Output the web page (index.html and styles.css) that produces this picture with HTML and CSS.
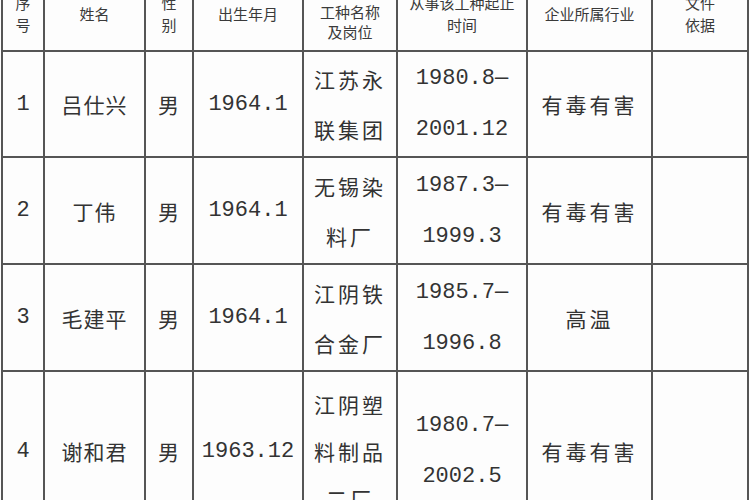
FILE: index.html
```html
<!DOCTYPE html>
<html lang="zh">
<head>
<meta charset="utf-8">
<title>人员名单</title>
<link rel="stylesheet" href="styles.css">
</head>
<body>
<div class="frame">
<table class="sheet">
  <colgroup>
    <col class="c-no"><col class="c-name"><col class="c-sex"><col class="c-birth">
    <col class="c-job"><col class="c-time"><col class="c-ind"><col class="c-doc">
  </colgroup>
  <thead>
    <tr class="head">
      <th>序<br>号</th>
      <th>姓名</th>
      <th>性<br>别</th>
      <th>出生年月</th>
      <th class="h-job">工种名称<br>及岗位</th>
      <th>从事该工种起止<br>时间</th>
      <th>企业所属行业</th>
      <th>文件<br>依据</th>
    </tr>
  </thead>
  <tbody>
    <tr class="r1">
      <td class="num">1</td>
      <td class="cn">吕仕兴</td>
      <td class="cn">男</td>
      <td class="num">1964.1</td>
      <td class="job">江苏永<br>联集团</td>
      <td class="num period">1980.8—<br>2001.12</td>
      <td class="cn wide">有毒有害</td>
      <td></td>
    </tr>
    <tr class="r2">
      <td class="num">2</td>
      <td class="cn">丁伟</td>
      <td class="cn">男</td>
      <td class="num">1964.1</td>
      <td class="job">无锡染<br>料厂</td>
      <td class="num period">1987.3—<br>1999.3</td>
      <td class="cn wide">有毒有害</td>
      <td></td>
    </tr>
    <tr class="r3">
      <td class="num">3</td>
      <td class="cn">毛建平</td>
      <td class="cn">男</td>
      <td class="num">1964.1</td>
      <td class="job">江阴铁<br>合金厂</td>
      <td class="num period">1985.7—<br>1996.8</td>
      <td class="cn wide">高温</td>
      <td></td>
    </tr>
    <tr class="r4">
      <td class="num">4</td>
      <td class="cn">谢和君</td>
      <td class="cn">男</td>
      <td class="num">1963.12</td>
      <td class="job tight">江阴塑<br>料制品<br>二厂</td>
      <td class="num period">1980.7—<br>2002.5</td>
      <td class="cn wide">有毒有害</td>
      <td></td>
    </tr>
  </tbody>
</table>
</div>
</body>
</html>
```

FILE: styles.css
```css
html, body {
  margin: 0;
  padding: 0;
  background: #ffffff;
}

.frame {
  width: 750px;
  height: 500px;
  overflow: hidden;
  background: #fdfdfd;
}

.sheet {
  margin-top: -24px;
  margin-left: 1px;
  width: 746px;
  border-collapse: collapse;
  table-layout: fixed;
  color: #333333;
  font-family: "Noto Sans CJK SC", sans-serif;
}

.c-no { width: 42px; }
.c-name { width: 101px; }
.c-sex { width: 48px; }
.c-birth { width: 110px; }
.c-job { width: 94px; }
.c-time { width: 130px; }
.c-ind { width: 125px; }
.c-doc { width: 96px; }

.sheet th,
.sheet td {
  border: 2px solid #555555;
  padding: 0;
  text-align: center;
  vertical-align: middle;
  overflow: hidden;
  white-space: nowrap;
}

.head {
  height: 74px;
}

.head th {
  font-size: 15px;
  font-weight: normal;
  line-height: 22px;
  color: #3a3a3a;
}

.head .h-job {
  padding-top: 16px;
  line-height: 20px;
}

.r1 { height: 106px; }
.r2 { height: 107px; }
.r3 { height: 107px; }
.r4 { height: 160px; }

.num {
  font-family: "Liberation Mono", "Noto Sans CJK SC", monospace;
  font-size: 22px;
}

.cn {
  font-size: 21px;
  letter-spacing: 1px;
}

.wide {
  letter-spacing: 3px;
  padding-left: 3px;
}

.job {
  font-size: 21px;
  line-height: 50px;
  letter-spacing: 3px;
  padding-left: 3px;
}

.job.tight {
  line-height: 47px;
}

.period {
  line-height: 51px;
}
```
